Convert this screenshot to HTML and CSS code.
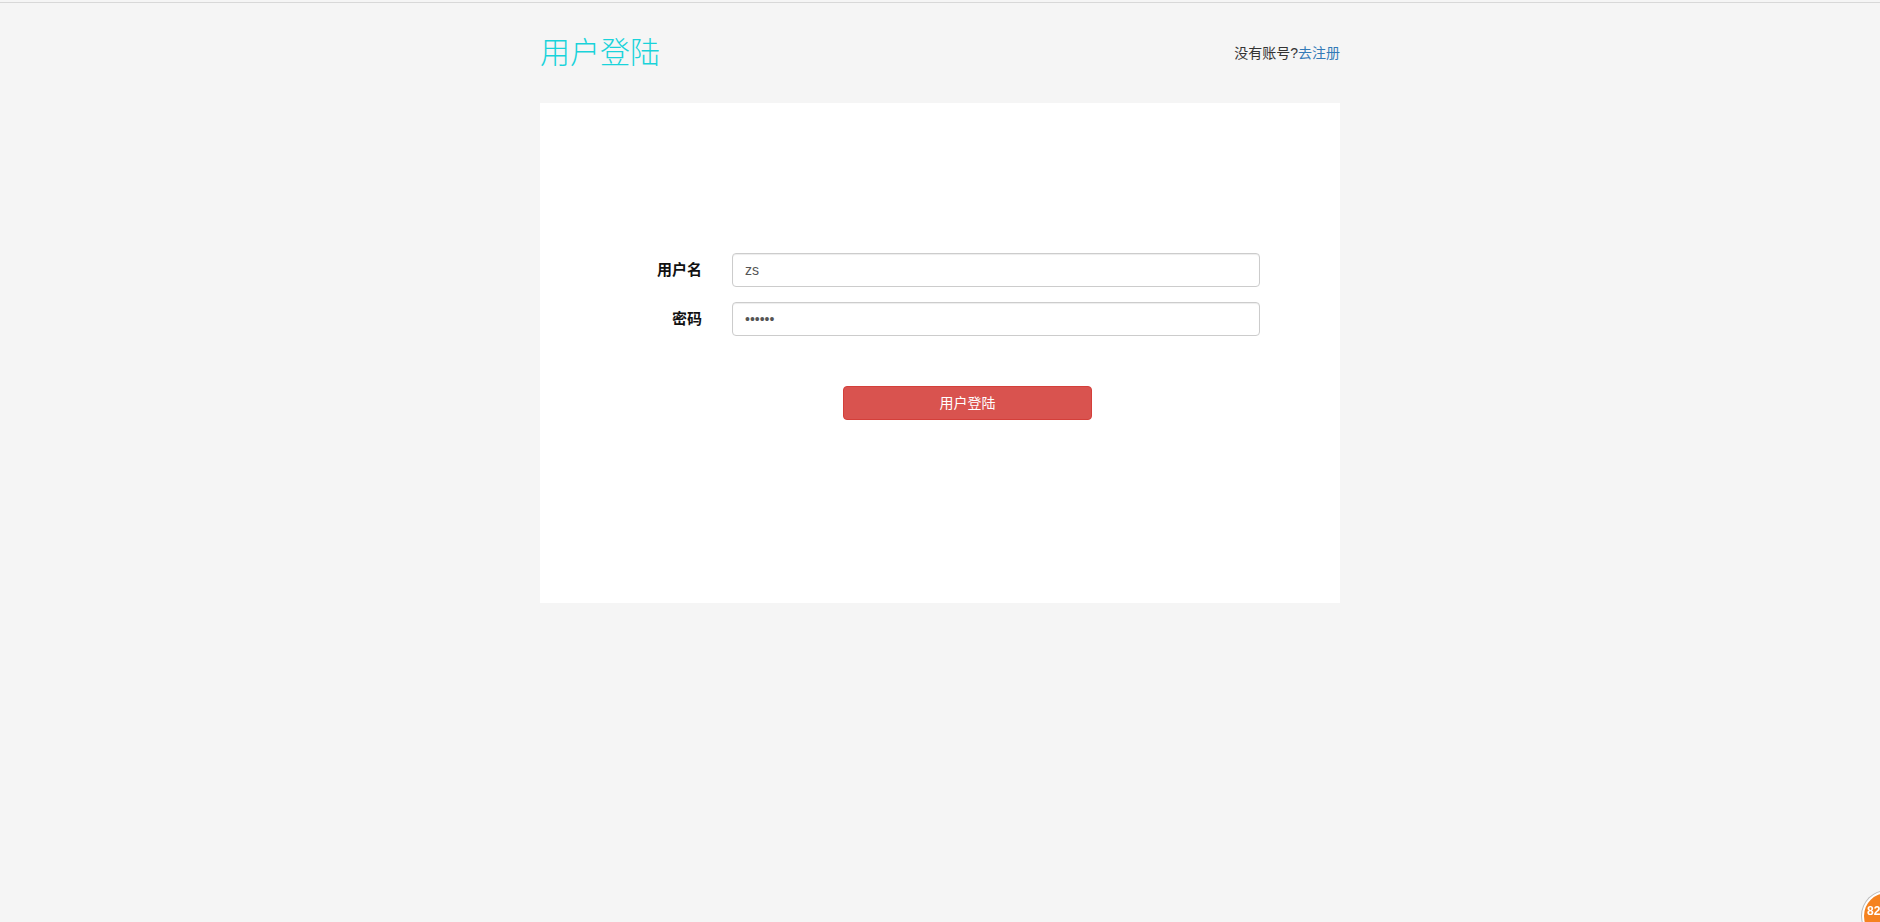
FILE: index.html
```html
<!DOCTYPE html>
<html lang="zh-CN">
<head>
<meta charset="utf-8">
<title>用户登陆</title>
<link rel="stylesheet" href="styles.css">
</head>
<body>
<div class="rule"></div>
<div class="page">
  <header class="head">
    <h1 class="title">用户登陆</h1>
    <div class="hint">没有账号?<a class="link" href="#">去注册</a></div>
  </header>
  <main class="card">
    <form class="form">
      <label class="label" for="u">用户名</label>
      <input class="input" id="u" type="text" value="zs">
      <label class="label" for="p">密码</label>
      <input class="input" id="p" type="password" value="123456">
      <button class="btn" type="button">用户登陆</button>
    </form>
  </main>
</div>
<div class="badge"><span class="badge-num">82</span></div>
</body>
</html>
```
FILE: styles.css
```css
* { box-sizing: border-box; }
html, body { height: 100%; }
body {
  margin: 0;
  background: #f5f5f5;
  overflow: hidden;
  font: 14px/20px "Liberation Sans", "Noto Sans CJK SC", sans-serif;
  color: #333;
}
.rule { height: 3px; border-bottom: 1px solid #d8d8d8; }
.page { width: 800px; margin: 0 auto; }
.head {
  height: 100px;
  display: flex;
  justify-content: space-between;
  align-items: flex-start;
}
.title {
  margin: 33px 0 0;
  font: 300 30px/33px "Liberation Serif", "Noto Sans CJK SC", serif;
  color: #19d3da;
}
.hint { margin-top: 40px; }
.link { color: #337ab7; text-decoration: none; }
.card {
  height: 500px;
  background: #fff;
  padding-top: 150px;
}
.form {
  display: grid;
  grid-template-columns: 162px 528px;
  column-gap: 30px;
  row-gap: 15px;
  align-items: center;
}
.label {
  font-size: 15px;
  font-weight: 700;
  text-align: right;
  color: #111;
}
.input {
  height: 34px;
  width: 100%;
  padding: 6px 12px;
  border: 1px solid #ccc;
  border-radius: 4px;
  background: #fff;
  box-shadow: inset 0 1px 1px rgba(0,0,0,.075);
  font: 14px/20px "Liberation Sans", "Noto Sans CJK SC", sans-serif;
  color: #555;
  outline: none;
}
.btn {
  grid-column: 1 / -1;
  justify-self: start;
  margin: 35px 0 0 303px;
  width: 249px;
  height: 34px;
  border: 1px solid #d43f3a;
  border-radius: 4px;
  background: #d9534f;
  color: #fff;
  font: 14px/20px "Liberation Sans", "Noto Sans CJK SC", sans-serif;
}
.badge {
  position: fixed;
  left: 1862px;
  top: 891px;
  width: 50px;
  height: 50px;
  border-radius: 50%;
  background: #f5821f;
  border: 2px solid #fff;
  box-shadow: 0 0 0 1px #bbb;
}
.badge-num {
  position: absolute;
  left: 3px;
  top: 10px;
  font: 700 12px/16px "Liberation Sans", sans-serif;
  color: #fff;
}
```
